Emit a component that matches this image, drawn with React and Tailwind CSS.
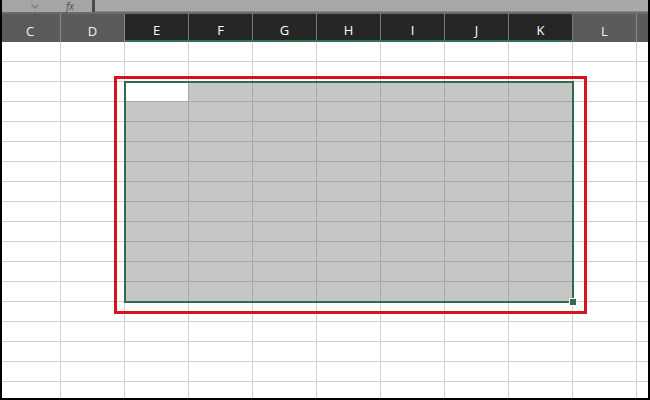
import React from 'react';

const COLS = [
  { id: 'C', w: 61 },
  { id: 'D', w: 64 },
  { id: 'E', w: 64 },
  { id: 'F', w: 64 },
  { id: 'G', w: 64 },
  { id: 'H', w: 64 },
  { id: 'I', w: 64 },
  { id: 'J', w: 64 },
  { id: 'K', w: 64 },
  { id: 'L', w: 64 },
  { id: '', w: 13 },
];

const SELECTED = ['E', 'F', 'G', 'H', 'I', 'J', 'K'];
const ROW_COUNT = 18;
const FIRST_SEL_ROW = 2;
const LAST_SEL_ROW = 12;

const isSelected = (col, row) => SELECTED.includes(col) && row >= FIRST_SEL_ROW && row <= LAST_SEL_ROW;

const Cell = ({ col, row, w }) => {
  const sel = isSelected(col, row);
  const active = col === 'E' && row === FIRST_SEL_ROW;
  let cls = 'h-[20px] shrink-0 border-r border-b border-[#d0d0d0] bg-white';
  if (sel && !active) cls = 'h-[20px] shrink-0 border-r border-b border-[#a9a9a9] bg-[#c6c6c6]';
  if (active) cls = 'h-[20px] shrink-0 border-r border-b border-[#a9a9a9] bg-white';
  return <div className={cls} style={{ width: w }} />;
};

const App = () => {
  return (
    <div className="relative w-[650px] h-[400px] overflow-hidden bg-white" style={{ fontFamily: '"Open Sans", "Noto Sans", sans-serif' }}>
      {/* formula bar (cut off at the top) */}
      <div className="flex h-[12px] bg-[#a5a5a5]">
        <div className="flex w-[92px] shrink-0 items-center">
          <svg className="ml-[31px] w-[8px] h-[5px]" viewBox="0 0 8 5" fill="none" stroke="#7a7a7a" strokeWidth="1.4">
            <path d="M0.5 0.5 L4 4 L7.5 0.5" />
          </svg>
          <span className="ml-[27px] text-[10px] leading-[11px] italic text-[#4d4d4d]">fx</span>
        </div>
        <div className="w-[3px] shrink-0 bg-[#4a4a4a]" />
        <div className="flex-1 bg-[#a8a8a8] border-b border-[#8a8a8a]" />
      </div>
      <div className="h-[2px] bg-[#6a6a6a]" />

      {/* column headers */}
      <div className="flex h-[28px]">
        {COLS.map((c, i) => {
          const sel = SELECTED.includes(c.id);
          return (
            <div
              key={i}
              className={
                sel
                  ? 'flex shrink-0 items-center justify-center pt-[8px] bg-[#262626] border-r border-[#7a7a7a] border-b-2 border-b-[#2f7050] text-[13px] text-white'
                  : 'flex shrink-0 items-center justify-center pt-[8px] bg-[#5b5b5b] border-r border-[#8c8c8c] text-[13px] text-[#f2f2f2]'
              }
              style={{ width: c.w }}
            >
              {c.id}
            </div>
          );
        })}
      </div>

      {/* cell grid */}
      <div className="flex flex-col">
        {Array.from({ length: ROW_COUNT }).map((_, r) => (
          <div key={r} className="flex">
            {COLS.map((c, i) => (
              <Cell key={i} col={c.id} row={r} w={c.w} />
            ))}
          </div>
        ))}
      </div>

      {/* selection outline + fill handle */}
      <div className="absolute left-[124px] top-[81px] w-[450px] h-[222px] border-2 border-[#2f6b4c]" />
      <div className="absolute left-[569px] top-[298px] w-[8px] h-[8px] bg-[#2f6b4c] border border-white" />

      {/* red highlight */}
      <div className="absolute left-[114px] top-[76px] w-[473px] h-[238px] border-[3px] border-[#d7141c]" />

      {/* screenshot frame */}
      <div className="absolute inset-0 border-2 border-t-0 border-black pointer-events-none" />
    </div>
  );
};

export default App;
